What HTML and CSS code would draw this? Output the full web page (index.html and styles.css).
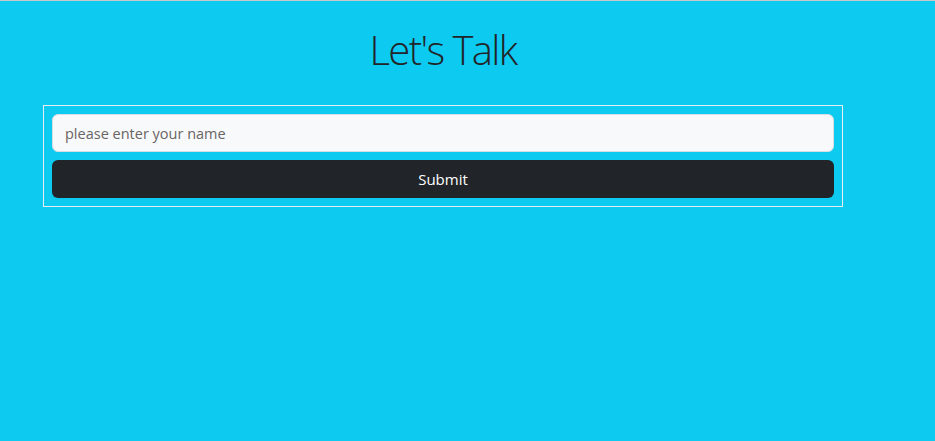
FILE: index.html
```html
<!DOCTYPE html>
<html lang="en">
<head>
<meta charset="utf-8">
<title>Let's Talk</title>
<link rel="stylesheet" href="styles.css">
</head>
<body>
<div class="page">
  <h1 class="title">Let's Talk</h1>
  <form class="panel">
    <input class="name-input" type="text" placeholder="please enter your name">
    <button class="submit-btn" type="button">Submit</button>
  </form>
</div>
</body>
</html>
```

FILE: styles.css
```css
html, body {
  margin: 0;
  padding: 0;
  height: 100%;
}
body {
  background: #0dcaf0;
  border-top: 1px solid #c8c8c8;
  box-sizing: border-box;
  font-family: "Open Sans", "Noto Sans", sans-serif;
  color: #212529;
}
.page {
  width: 800px;
  margin-left: 43px;
  display: flex;
  flex-direction: column;
}
.title {
  margin: 25px 0 0 0;
  height: 79px;
  font-family: "Open Sans", sans-serif;
  font-size: 40px;
  line-height: 48px;
  font-weight: 300;
  letter-spacing: -1.6px;
  text-align: center;
}
.panel {
  border: 1px solid #e6eef2;
  padding: 8px;
  display: flex;
  flex-direction: column;
  gap: 8px;
}
.name-input {
  height: 38px;
  box-sizing: border-box;
  border: 1px solid #d6dde3;
  border-radius: 6px;
  background: #f8f9fa;
  padding: 6px 12px;
  font-family: inherit;
  font-size: 14.5px;
  color: #212529;
  outline: none;
}
.name-input::placeholder {
  color: #6a6464;
}
.submit-btn {
  height: 38px;
  border: none;
  border-radius: 6px;
  background: #212529;
  color: #fff;
  font-family: inherit;
  font-size: 15px;
}
```
